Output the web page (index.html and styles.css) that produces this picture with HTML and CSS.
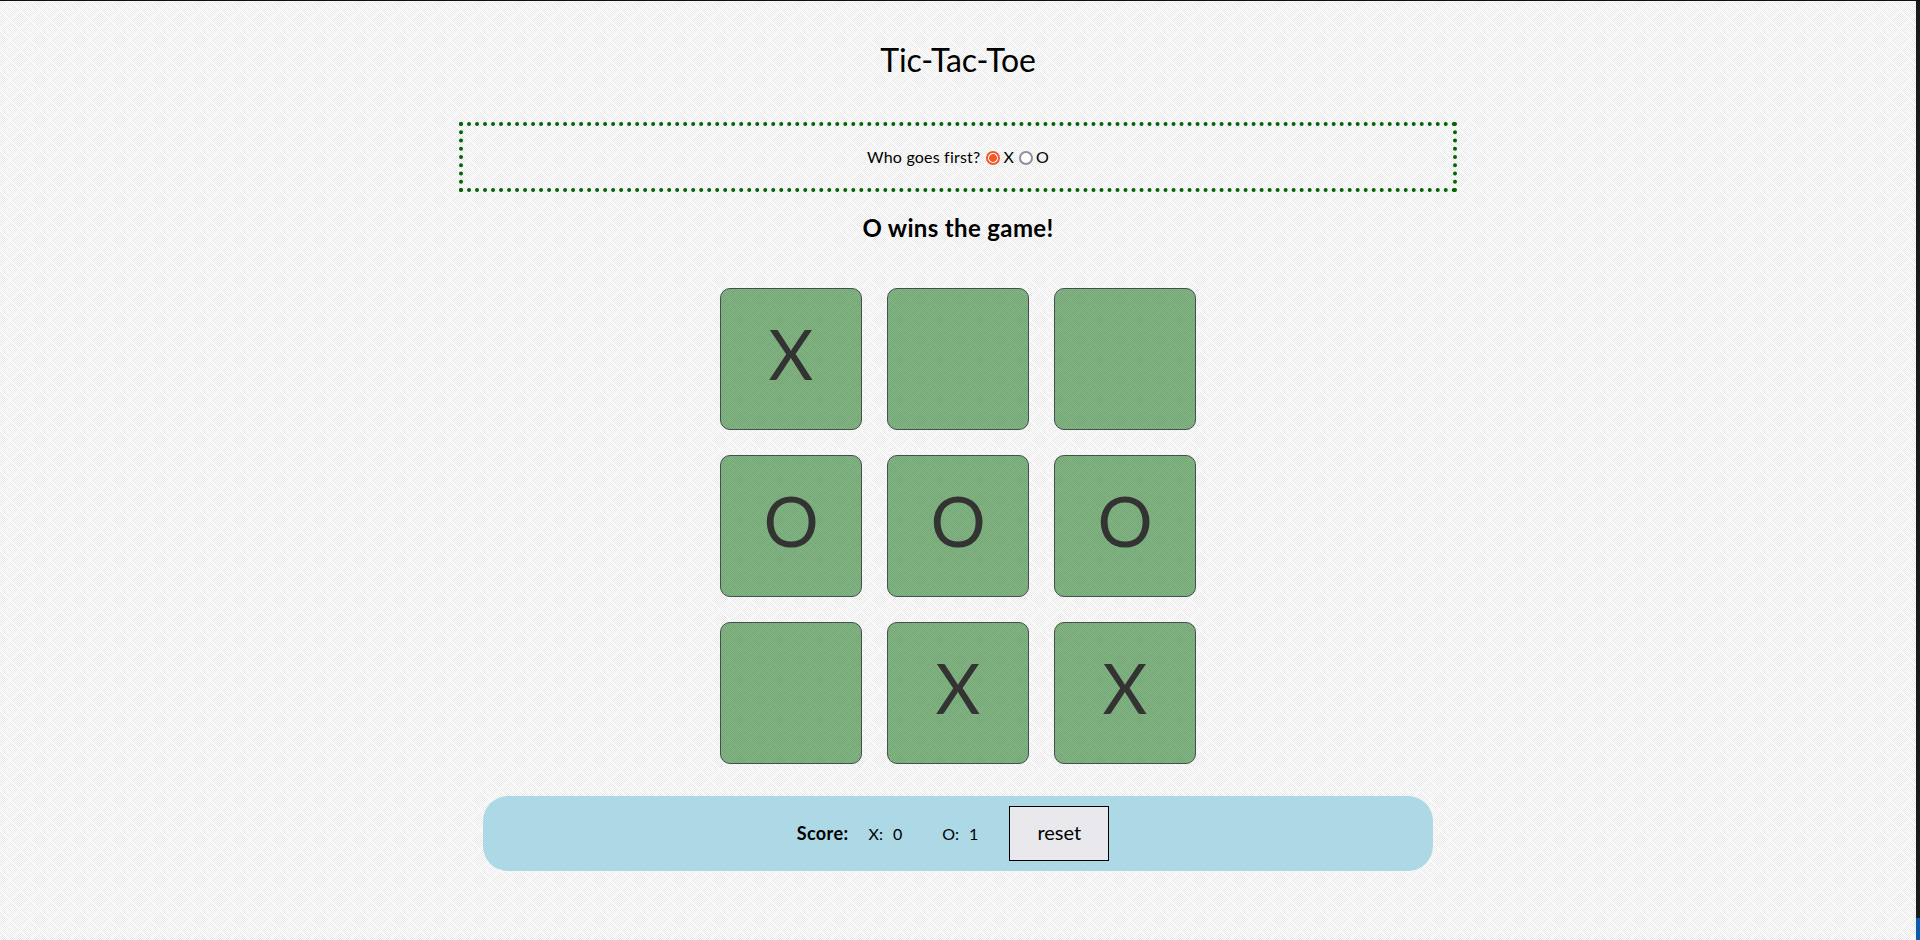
FILE: index.html
```html
<!DOCTYPE html>
<html lang="en">
<head>
<meta charset="utf-8">
<title>Tic-Tac-Toe</title>
<link rel="stylesheet" href="styles.css">
</head>
<body>
<div class="page">
  <main class="content">
    <h1 class="title">Tic-Tac-Toe</h1>
    <form class="first">
      <span class="first-label">Who goes first?</span>
      <label class="choice"><input class="radio" type="radio" name="first" checked><span>X</span></label>
      <label class="choice"><input class="radio" type="radio" name="first"><span>O</span></label>
    </form>
    <h2 class="status">O wins the game!</h2>
    <div class="board">
      <button class="cell">X</button>
      <button class="cell"></button>
      <button class="cell"></button>
      <button class="cell">O</button>
      <button class="cell">O</button>
      <button class="cell">O</button>
      <button class="cell"></button>
      <button class="cell">X</button>
      <button class="cell">X</button>
    </div>
    <section class="score">
      <strong class="score-label">Score:</strong>
      <span class="tally"><span>X:</span><span>0</span></span>
      <span class="tally"><span>O:</span><span>1</span></span>
      <button class="reset">reset</button>
    </section>
  </main>
  <div class="rail"><div class="rail-thumb"></div></div>
</div>
</body>
</html>
```
FILE: styles.css
```css
* { box-sizing: border-box; }
html, body { margin: 0; height: 100%; overflow: hidden; }
body {
  font-family: "Lato", "Open Sans", sans-serif;
  color: #000;
  border-top: 1px solid #111;
  background-color: #f6f6f6;
  background-image:
    url("data:image/svg+xml,%3Csvg xmlns='http://www.w3.org/2000/svg' width='20' height='20'%3E%3Cpath d='M10 0L20 10L10 20L0 10Z' fill='none' stroke='%23fff' stroke-opacity='.5' stroke-width='1.6'/%3E%3Cpath d='M10 6L14 10L10 14L6 10Z' fill='none' stroke='%23fff' stroke-opacity='.5' stroke-width='1.2'/%3E%3C/svg%3E"),
    repeating-conic-gradient(#fff 0 25%, #e6e6e6 0 50%);
  background-size: 20px 20px, 2px 2px;
}
.page { display: flex; height: 100%; }
.content { flex: 1; display: flex; flex-direction: column; align-items: center; }
.rail { width: 4px; background: #1a1a1a; display: flex; align-items: flex-end; }
.rail-thumb { width: 100%; height: 22px; background: #0b5cad; }
.title {
  margin: 39px 0 42px;
  font-size: 32px;
  line-height: 40px;
  font-weight: 400;
  letter-spacing: -0.2px;
}
.first {
  width: 998px;
  height: 70px;
  border: 4px dotted #006400;
  display: flex;
  align-items: center;
  justify-content: center;
  padding-bottom: 2px;
  font-size: 16px;
  letter-spacing: 0.2px;
}
.first-label { margin-right: 6px; }
.choice { display: flex; align-items: center; gap: 3px; margin-right: 5px; }
.choice:last-child { margin-right: 0; }
.radio {
  appearance: none;
  width: 14px;
  height: 14px;
  margin: 3px 0 0;
  border-radius: 50%;
  border: 2px solid #8f8f9d;
  background: #fff;
}
.radio:checked {
  border-color: #f0582a;
  background: radial-gradient(circle, #f0582a 0 3.6px, #fff 4.2px);
}
.status {
  margin: 19px 0 44px;
  font-size: 24px;
  line-height: 33px;
  font-weight: 700;
  letter-spacing: 0.35px;
}
.board {
  display: grid;
  grid-template-columns: repeat(3, 142px);
  grid-auto-rows: 142px;
  gap: 25px;
}
.cell {
  padding: 0 0 11px;
  border: 1px solid #44504a;
  border-radius: 10px;
  background: rgba(0, 100, 0, 0.49);
  color: #333;
  font-family: inherit;
  font-size: 69px;
  line-height: 1;
}
.score {
  margin-top: 32px;
  width: 950px;
  height: 75px;
  padding-bottom: 1px;
  border-radius: 25px;
  background: #add8e6;
  display: flex;
  align-items: center;
  justify-content: center;
}
.score-label { font-size: 18px; font-weight: 700; letter-spacing: 0.4px; margin-right: 20px; }
.tally { display: flex; gap: 10px; font-size: 16px; margin-right: 40px; }
.tally:last-of-type { margin-right: 31px; }
.reset {
  width: 100px;
  height: 55px;
  padding: 0 0 2px;
  margin-right: 10px;
  border: 1px solid #000;
  background: #e9e9ed;
  color: #000;
  font-family: inherit;
  font-size: 20px;
}
```
